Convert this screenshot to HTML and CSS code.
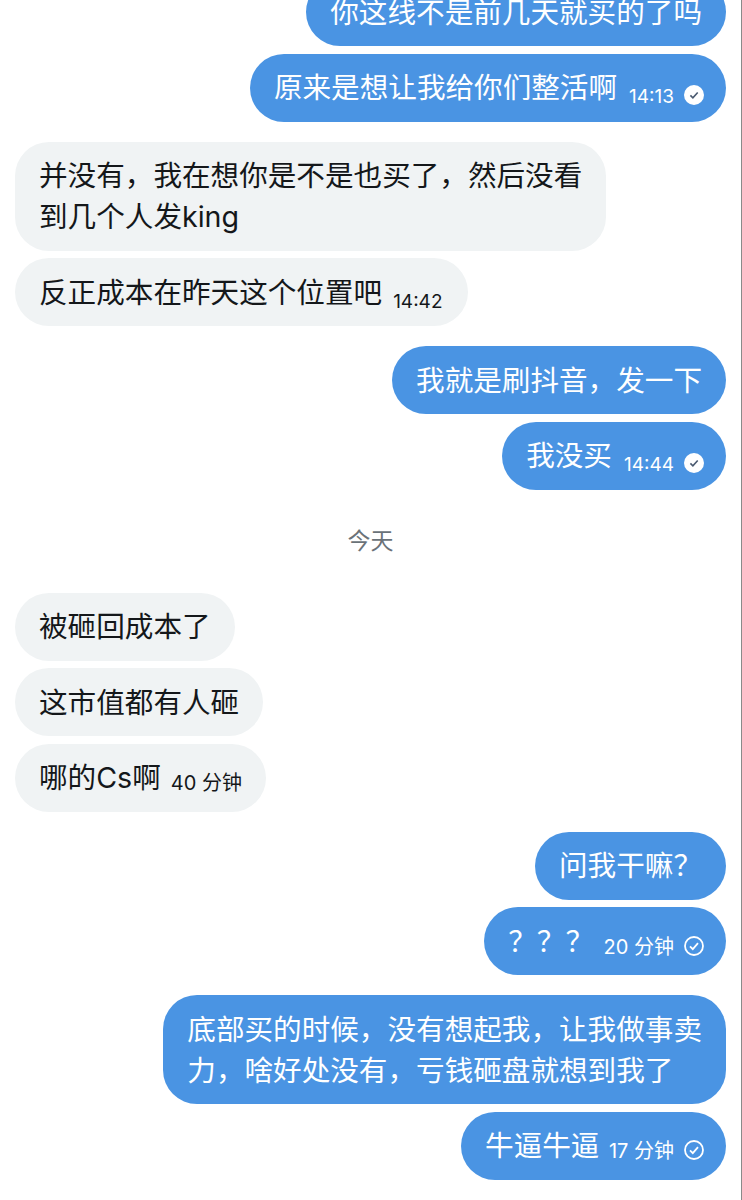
FILE: index.html
```html
<!DOCTYPE html>
<html lang="zh">
<head>
<meta charset="utf-8">
<title>Chat</title>
<link rel="stylesheet" href="styles.css">
</head>
<body>
<main class="chat">
  <div class="msg out first"><span class="text">你这线不是前几天就买的了吗</span></div>
  <div class="msg out ticked"><span class="text">原来是想让我给你们整活啊</span><span class="time">14:13</span><svg class="tick read" viewBox="0 0 20 20"><circle cx="10" cy="10" r="10" fill="#fff"/><path d="M6.4 10.4l2.5 2.5 4.8-5.4" fill="none" stroke="#4a5a70" stroke-width="1.6"/></svg></div>
  <div class="msg in group"><span class="text">并没有，我在想你是不是也买了，然后没看<br>到几个人发king</span></div>
  <div class="msg in"><span class="text">反正成本在昨天这个位置吧</span><span class="time">14:42</span></div>
  <div class="msg out group"><span class="text">我就是刷抖音，发一下</span></div>
  <div class="msg out ticked"><span class="text">我没买</span><span class="time">14:44</span><svg class="tick read" viewBox="0 0 20 20"><circle cx="10" cy="10" r="10" fill="#fff"/><path d="M6.4 10.4l2.5 2.5 4.8-5.4" fill="none" stroke="#4a5a70" stroke-width="1.6"/></svg></div>
  <div class="day">今天</div>
  <div class="msg in"><span class="text">被砸回成本了</span></div>
  <div class="msg in"><span class="text">这市值都有人砸</span></div>
  <div class="msg in"><span class="text">哪的Cs啊</span><span class="time ago">40 分钟</span></div>
  <div class="msg out group"><span class="text">问我干嘛？</span></div>
  <div class="msg out ticked"><span class="text">？？？</span><span class="time ago">20 分钟</span><svg class="tick" viewBox="0 0 20 20"><circle cx="10" cy="10" r="9" fill="none" stroke="#fff" stroke-width="1.8"/><path d="M6 10.4l2.8 2.8 5.2-6" fill="none" stroke="#fff" stroke-width="1.8"/></svg></div>
  <div class="msg out group"><span class="text">底部买的时候，没有想起我，让我做事卖<br>力，啥好处没有，亏钱砸盘就想到我了</span></div>
  <div class="msg out ticked"><span class="text">牛逼牛逼</span><span class="time ago">17 分钟</span><svg class="tick" viewBox="0 0 20 20"><circle cx="10" cy="10" r="9" fill="none" stroke="#fff" stroke-width="1.8"/><path d="M6 10.4l2.8 2.8 5.2-6" fill="none" stroke="#fff" stroke-width="1.8"/></svg></div>
</main>
</body>
</html>
```
FILE: styles.css
```css
* { box-sizing: border-box; }
html, body { margin: 0; padding: 0; background: #fff; }
body { font-family: "Inter", "Noto Sans CJK SC", "Noto Sans", sans-serif; overflow: hidden; }
.chat {
  height: 1200px;
  overflow: hidden;
  display: flex;
  flex-direction: column;
  gap: 7.5px;
  padding: 0 15px;
  border-right: 1px solid #8a8a8a;
}
.msg {
  padding: 13.5px 24px;
  border-radius: 34px;
  font-size: 28.6px;
  font-weight: 400;
  line-height: 41px;
  display: flow-root;
  white-space: nowrap;
}
.msg.group { margin-top: 12.5px; }
.msg.in { align-self: flex-start; background: #f0f3f4; color: #14171a; }
.msg.out { align-self: flex-end; background: #4a94e3; color: #fff; }
.msg.first { margin-top: -22px; }
.msg.ticked { padding-right: 22px; }
.time { font-size: 19px; font-weight: 400; line-height: 1; margin-left: 11px; position: relative; top: 5px; }
.ticked .time { margin-left: 12px; }
.in .time { margin-right: 1.5px; }
.time.ago { font-size: 20px; top: 2px; }
.in .time.ago { margin-left: 10px; margin-right: 0; }
.ticked .time.ago { margin-left: 9.5px; }
.tick { width: 20px; height: 20px; margin-left: 10px; vertical-align: -4px; }
.tick.read { vertical-align: -7px; }
.day { align-self: center; margin: 20px 0; font-size: 23px; font-weight: 400; line-height: 48px; color: #6a7278; }
```
